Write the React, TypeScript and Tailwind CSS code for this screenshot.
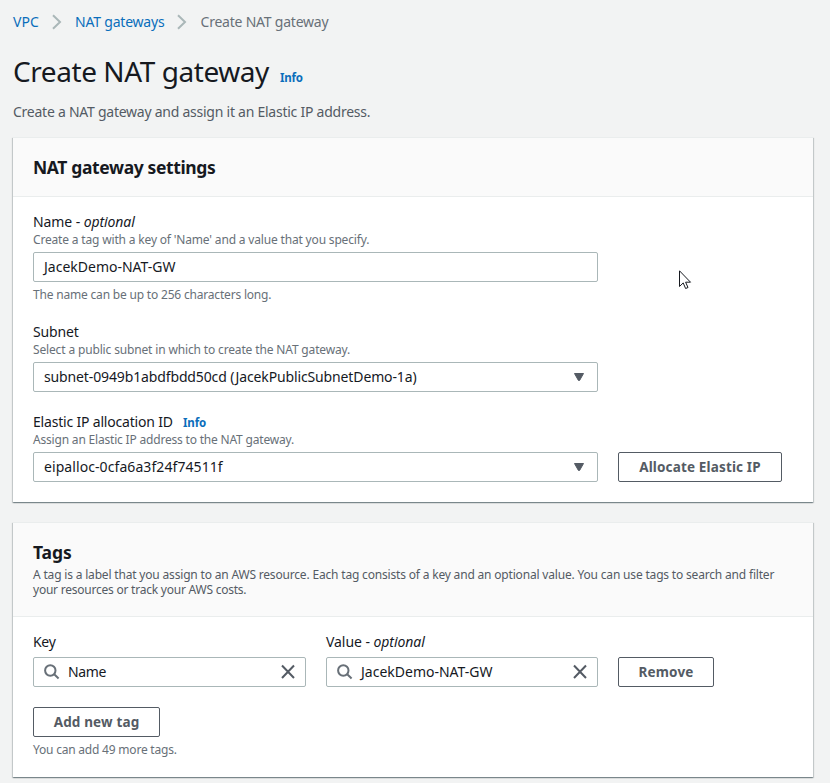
import type { ReactNode } from "react";

function Chevron() {
  return (
    <svg className="-mt-px h-4 w-[10px] shrink-0" viewBox="0 0 10 16" fill="none" stroke="#aab7b8" strokeWidth="2">
      <path d="M1 1.3 8 8 1 14.7" />
    </svg>
  );
}

function Caret() {
  return (
    <svg className="h-2 w-[10px] shrink-0" viewBox="0 0 10 8" fill="#545b64" stroke="#545b64" strokeLinejoin="round">
      <path d="M.5 .5h9L5.6 7.4H4.4z" />
    </svg>
  );
}

function SearchIcon() {
  return (
    <svg className="size-4 shrink-0" viewBox="0 0 16 16" fill="none" stroke="#687078" strokeWidth="2">
      <circle cx="6.3" cy="6.5" r="5.2" />
      <path d="m10.2 10.3 4.4 4.2" />
    </svg>
  );
}

function CloseIcon() {
  return (
    <svg className="size-4 shrink-0" viewBox="0 0 16 16" fill="none" stroke="#545b64" strokeWidth="2">
      <path d="m2 1.5 12 12.5M14 1.5 2 14" />
    </svg>
  );
}

function Cursor() {
  return (
    <svg className="absolute left-[679px] top-[270px] h-[20px] w-[13px]" viewBox="0 0 13 20" fill="#fff" stroke="#16191f">
      <path d="M.5 .8v15.7l3.7-3.6 2.4 5.6 2.4-1-2.4-5.3h4.9z" />
    </svg>
  );
}

function Card({ header, children }: { header: ReactNode; children: ReactNode }) {
  return (
    <section className="flex flex-col bg-white shadow-[0_1px_1px_0_rgba(0,28,36,0.3),1px_1px_1px_0_rgba(0,28,36,0.15),-1px_1px_1px_0_rgba(0,28,36,0.15)]">
      <header className="border-y border-[#eaeded] bg-[#fafafa] px-5">{header}</header>
      {children}
    </section>
  );
}

function Label({ children }: { children: ReactNode }) {
  return <div className="h-5 whitespace-nowrap leading-5">{children}</div>;
}

function Hint({ className = "", children }: { className?: string; children: ReactNode }) {
  return <div className={`h-4 whitespace-nowrap text-[12px] leading-4 text-[#687078] ${className}`}>{children}</div>;
}

function Field({ className = "", children }: { className?: string; children: ReactNode }) {
  return (
    <div className={`flex h-[30px] items-center rounded-[2px] border border-[#aab7b8] bg-white pl-[10px] leading-[28px] ${className}`}>
      {children}
    </div>
  );
}

function Value({ className = "", children }: { className?: string; children: ReactNode }) {
  return <span className={`h-7 whitespace-nowrap ${className}`}>{children}</span>;
}

function Button({ className, children }: { className: string; children: ReactNode }) {
  return (
    <button className={`flex h-[30px] justify-center whitespace-nowrap rounded-[2px] border border-[#545b64] bg-white text-[13.5px] font-bold leading-[29px] text-[#545b64] ${className}`}>
      {children}
    </button>
  );
}

export default function App() {
  return (
    <main className="relative h-[783px] w-[830px] overflow-hidden bg-[#f2f3f3] pl-[13px] pr-[17px] font-['Noto_Sans',sans-serif] text-[14px] text-[#16191f]">
      <nav className="flex h-11 items-center whitespace-nowrap leading-[22px] text-[#0a6ebb]">
        <a className="w-[39px] tracking-[0.1px]">VPC</a>
        <Chevron />
        <a className="ml-[13px] w-[102px] tracking-[-0.2px]">NAT gateways</a>
        <Chevron />
        <span className="ml-[13.5px] tracking-[-0.22px] text-[#687078]">Create NAT gateway</span>
      </nav>
      <div className="flex h-14 items-baseline whitespace-nowrap">
        <h1 className="w-[267px] text-[28px] leading-[54px] tracking-[-0.43px]">Create NAT gateway</h1>
        <a className="text-[11.5px] font-bold tracking-[-0.2px] text-[#0a6ebb]">Info</a>
      </div>
      <p className="h-[37px] whitespace-nowrap leading-6 tracking-[-0.25px] text-[#545b64]">
        Create a NAT gateway and assign it an Elastic IP address.
      </p>

      <div className="flex flex-col gap-5">
        <Card header={<h2 className="h-[58px] whitespace-nowrap text-[17.5px] font-bold leading-[58px] tracking-[-0.37px]">NAT gateway settings</h2>}>
          <div className="flex h-[305px] flex-col px-5 pt-[15px]">
            <Label>
              <span className="tracking-[-0.09px]">Name - <i>optional</i></span>
            </Label>
            <Hint className="tracking-[-0.17px]">Create a tag with a key of 'Name' and a value that you specify.</Hint>
            <Field className="mt-1 w-[565px]">
              <Value className="tracking-[0px]">JacekDemo-NAT-GW</Value>
            </Field>
            <Hint className="mt-[5px] tracking-[-0.19px]">The name can be up to 256 characters long.</Hint>

            <div className="mt-[19px]">
              <Label>
                <span className="tracking-[-0.15px]">Subnet</span>
              </Label>
              <Hint className="tracking-[-0.15px]">Select a public subnet in which to create the NAT gateway.</Hint>
              <Field className="mt-1 w-[565px] justify-between pr-[13px]">
                <Value className="tracking-[-0.13px]">subnet-0949b1abdfbdd50cd (JacekPublicSubnetDemo-1a)</Value>
                <Caret />
              </Field>
            </div>

            <div className="mt-5">
              <Label>
                <span className="inline-block w-[150px] tracking-[-0.19px]">Elastic IP allocation ID</span>
                <a className="text-[11.5px] font-bold tracking-[-0.1px] text-[#0a6ebb]">Info</a>
              </Label>
              <Hint className="tracking-[-0.19px]">Assign an Elastic IP address to the NAT gateway.</Hint>
              <div className="mt-1 flex gap-5">
                <Field className="w-[565px] justify-between pr-[13px]">
                  <Value className="tracking-[0.08px]">eipalloc-0cfa6a3f24f74511f</Value>
                  <Caret />
                </Field>
                <Button className="w-[164px] tracking-[0.15px]">Allocate Elastic IP</Button>
              </div>
            </div>
          </div>
        </Card>

        <Card
          header={
            <div className="h-[93px] pt-[18px]">
              <h2 className="h-[26px] text-[17.5px] font-bold leading-[22px] tracking-[-0.1px]">Tags</h2>
              <p className="h-[15px] whitespace-nowrap text-[12px] leading-[15px] tracking-[-0.18px] text-[#545b64]">
                A tag is a label that you assign to an AWS resource. Each tag consists of a key and an optional value. You can use tags to search and filter
              </p>
              <p className="h-[15px] whitespace-nowrap text-[12px] leading-[15px] tracking-[-0.23px] text-[#545b64]">
                your resources or track your AWS costs.
              </p>
            </div>
          }
        >
          <div className="flex h-[160px] flex-col px-5 pt-[15px]">
            <div className="flex gap-5">
              <div className="w-[273px]">
                <Label>
                  <span className="tracking-[-0.3px]">Key</span>
                </Label>
                <Field className="mt-[5px] pr-[9px]">
                  <SearchIcon />
                  <Value className="ml-2 grow tracking-[-0.35px]">Name</Value>
                  <CloseIcon />
                </Field>
              </div>
              <div className="w-[272px]">
                <Label>
                  <span className="tracking-[-0.06px]">Value - <i>optional</i></span>
                </Label>
                <Field className="mt-[5px] pr-[9px]">
                  <SearchIcon />
                  <Value className="ml-2 grow tracking-[0px]">JacekDemo-NAT-GW</Value>
                  <CloseIcon />
                </Field>
              </div>
              <Button className="w-[96px] self-end tracking-[0.15px]">Remove</Button>
            </div>
            <Button className="mt-5 w-[127px] tracking-[0.15px]">Add new tag</Button>
            <Hint className="mt-[5px] tracking-[-0.21px]">You can add 49 more tags.</Hint>
          </div>
        </Card>
      </div>
      <Cursor />
    </main>
  );
}
